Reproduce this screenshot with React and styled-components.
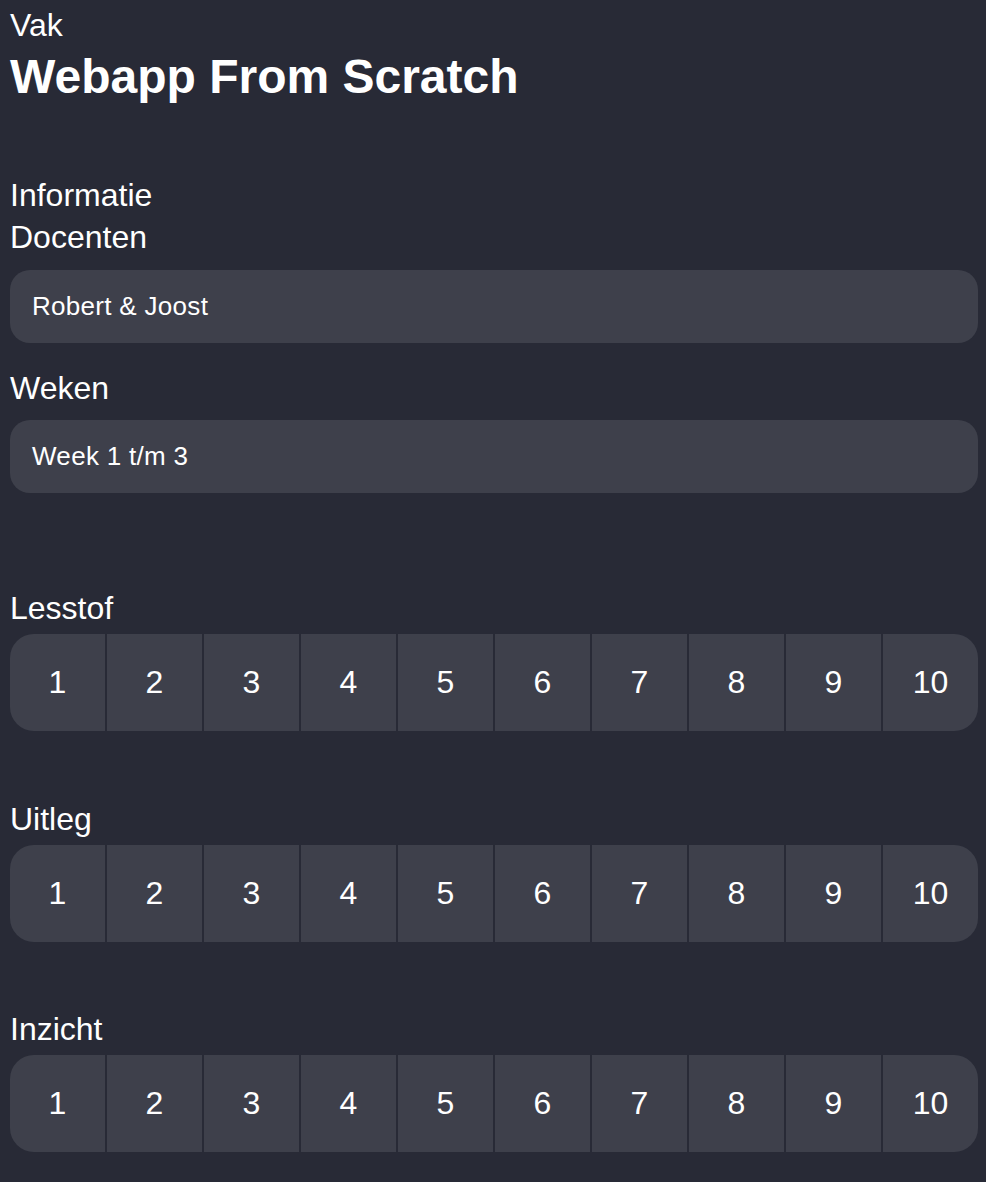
import React from 'react'
import styled, { createGlobalStyle } from 'styled-components'

const GlobalStyle = createGlobalStyle`
  html, body {
    margin: 0;
    background: #282a36;
  }
  body {
    font-family: "Liberation Sans", Arial, sans-serif;
    color: #ffffff;
  }
`

const scores = [1, 2, 3, 4, 5, 6, 7, 8, 9, 10]

const App = () => {
  return (
    <Page>
      <GlobalStyle />
      <Label $top={0} $bottom={0}>Vak</Label>
      <Title>Webapp From Scratch</Title>

      <Label $top={73} $bottom={0}>Informatie</Label>
      <Label $top={5} $bottom={14}>Docenten</Label>
      <InfoBox>Robert &amp; Joost</InfoBox>
      <Label $top={27} $bottom={13}>Weken</Label>
      <InfoBox>Week 1 t/m 3</InfoBox>

      <Label $top={97}>Lesstof</Label>
      <Scale>
        {scores.map((n) => (
          <Cell key={n}>{n}</Cell>
        ))}
      </Scale>

      <Label $top={70}>Uitleg</Label>
      <Scale>
        {scores.map((n) => (
          <Cell key={n}>{n}</Cell>
        ))}
      </Scale>

      <Label $top={69}>Inzicht</Label>
      <Scale>
        {scores.map((n) => (
          <Cell key={n}>{n}</Cell>
        ))}
      </Scale>
    </Page>
  )
}

export default App

const Page = styled.div`
  display: flex;
  flex-direction: column;
  padding: 7px 8px 30px 10px;
`
const Title = styled.h1`
  margin: 5px 0 0;
  font-size: 48px;
  line-height: 55px;
  font-weight: 700;
`
const Label = styled.div`
  margin-top: ${(p) => p.$top ?? 11}px;
  margin-bottom: ${(p) => p.$bottom ?? 7}px;
  font-size: 32px;
  line-height: 37px;
`
const InfoBox = styled.div`
  display: flex;
  align-items: center;
  height: 73px;
  padding: 0 22px;
  background: #3e404b;
  border-radius: 20px;
  font-size: 26px;
  letter-spacing: 0.3px;
`
const Scale = styled.div`
  display: grid;
  grid-template-columns: repeat(10, 1fr);
  gap: 2px;
  border-radius: 24px;
  overflow: hidden;
`
const Cell = styled.div`
  display: flex;
  align-items: center;
  justify-content: center;
  height: 97px;
  background: #3e404b;
  font-size: 32px;
  cursor: pointer;
  :hover {
    background: #4a4c58;
  }
`
